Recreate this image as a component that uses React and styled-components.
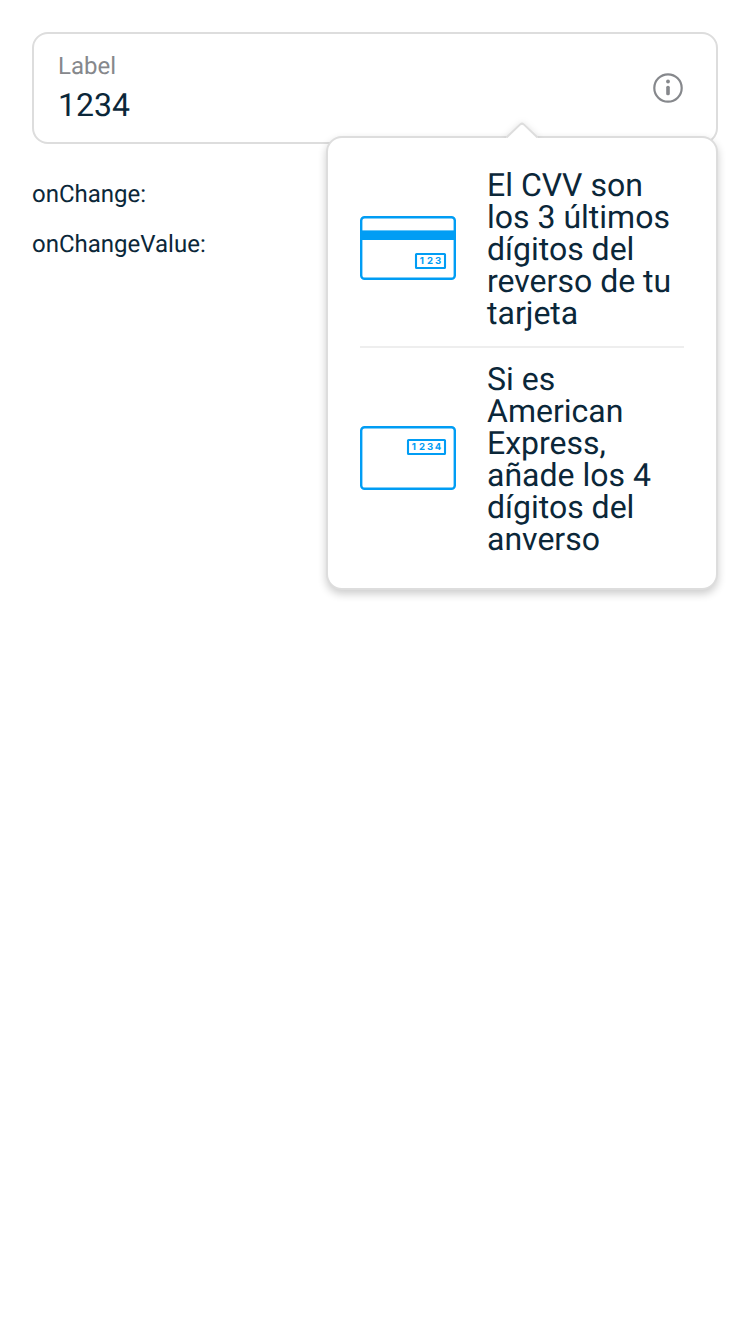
import React from "react";
import styled, { createGlobalStyle } from "styled-components";

const GlobalStyle = createGlobalStyle`
  * { box-sizing: border-box; }
  body {
    margin: 0;
    background: #fff;
    color: #0b2739;
    font-family: Roboto, "Liberation Sans", sans-serif;
    text-rendering: geometricPrecision;
  }
`;

const Page = styled.main`
  min-height: 1334px;
  padding: 32px;
`;

const Field = styled.div`
  position: relative;
  display: flex;
  align-items: center;
  justify-content: space-between;
  height: 112px;
  padding: 0 32px 0 24px;
  border: 2px solid #dddddd;
  border-radius: 16px;
`;

const FieldText = styled.div`
  display: flex;
  flex-direction: column;
  padding-top: 2px;
`;

const Label = styled.label`
  font-size: 24px;
  line-height: 32px;
  color: #86888c;
`;

const Value = styled.span`
  font-size: 32px;
  line-height: 46px;
`;

const Tooltip = styled.div`
  position: absolute;
  top: 102px;
  right: -2px;
  width: 392px;
  height: 454px;
  padding: 31px 32px;
  background: #fff;
  border: 2px solid #dddddd;
  border-radius: 16px;
  box-shadow: 0 4px 8px rgba(0, 0, 0, 0.2);
`;

const Arrow = styled.svg`
  position: absolute;
  top: -16px;
  left: 176px;
  filter: drop-shadow(0 0 3px rgba(0, 0, 0, 0.1));
  clip-path: inset(-10px -10px 2px);
`;

const Tip = styled.div`
  display: flex;
  align-items: center;
  gap: 31px;
  font-size: 32px;
  line-height: 32px;
`;

const TipText = styled.div`
  flex: 1;
  white-space: nowrap;
`;

const Divider = styled.div`
  height: 2px;
  margin: 17px 0 15px;
  background: #eeeeee;
`;

const CardSvg = styled.svg`
  flex: none;
  display: block;
  margin-top: -2px;
`;

const Digits = styled.text`
  fill: #019df4;
  font-family: Inter, Roboto, sans-serif;
  font-size: 9.6px;
  font-weight: 700;
`;

const Log = styled.p`
  margin: ${({ $top }) => $top}px 0 0;
  font-size: 24px;
  line-height: 32px;
`;

const InfoIcon = () => (
  <svg width="32" height="32" viewBox="0 0 32 32">
    <circle cx="16" cy="16" r="13.7" fill="none" stroke="#86888c" strokeWidth="2.2" />
    <circle cx="16" cy="9.5" r="1.9" fill="#86888c" />
    <rect x="14.2" y="13.7" width="3.6" height="9.6" rx="1.6" fill="#86888c" />
  </svg>
);

const CardIcon = ({ stripe, digits, box }) => (
  <CardSvg width="96" height="64" viewBox="0 0 96 64">
    <rect x="1.2" y="1.2" width="93.6" height="61.6" rx="3.4" fill="none" stroke="#019df4" strokeWidth="2.4" />
    {stripe && <rect y="14.4" width="96" height="9.6" fill="#019df4" />}
    <rect x={box.x} y={box.y} width={box.w} height="14" rx="0.6" fill="none" stroke="#019df4" strokeWidth="2.1" />
    {digits.split("").map((d, i) => (
      <Digits key={d} x={box.x + 5.8 + i * 8.1} y={box.y + 10.3} textAnchor="middle">{d}</Digits>
    ))}
  </CardSvg>
);

export default function App() {
  return (
    <>
      <GlobalStyle />
      <Page>
        <Field>
          <FieldText>
            <Label>Label</Label>
            <Value>1234</Value>
          </FieldText>
          <InfoIcon />
          <Tooltip>
            <Arrow width="36" height="18" viewBox="0 0 36 18">
              <path d="M2 18V16L16.2 2.8Q18 1.2 19.8 2.8L34 16V18Z" fill="#fff" />
              <path d="M2.5 15.5L16.2 2.4Q18 .8 19.8 2.4L33.5 15.5" fill="none" stroke="#dddddd" strokeWidth="2" />
            </Arrow>
            <Tip>
              <CardIcon stripe digits="123" box={{ x: 56, y: 38, w: 29 }} />
              <TipText>
                El CVV son<br />los 3 últimos<br />dígitos del<br />reverso de tu<br />tarjeta
              </TipText>
            </Tip>
            <Divider />
            <Tip>
              <CardIcon digits="1234" box={{ x: 48, y: 14, w: 37 }} />
              <TipText>
                Si es<br />American<br />Express,<br />añade los 4<br />dígitos del<br />anverso
              </TipText>
            </Tip>
          </Tooltip>
        </Field>
        <Log $top={34}>onChange:</Log>
        <Log $top={18}>onChangeValue:</Log>
      </Page>
    </>
  );
}
